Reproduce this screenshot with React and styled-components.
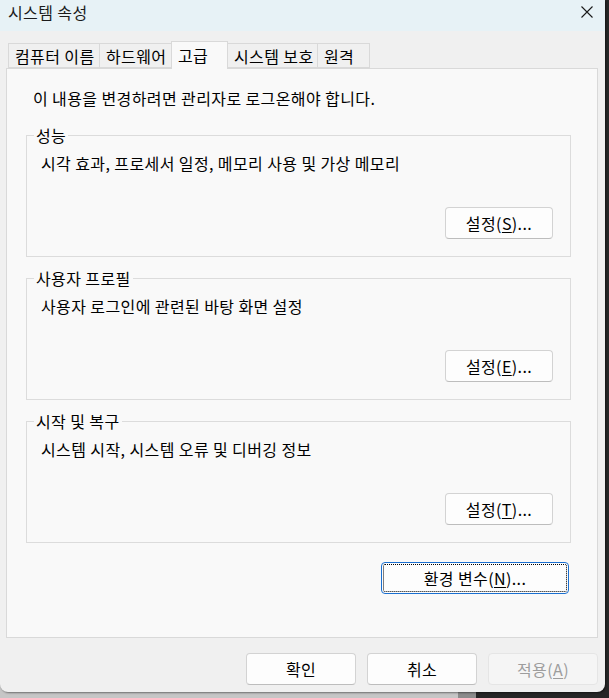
import React from 'react';
import styled, { createGlobalStyle } from 'styled-components';

const Global = createGlobalStyle`
  html, body { margin: 0; padding: 0; }
  body {
    width: 609px;
    height: 698px;
    overflow: hidden;
    background: linear-gradient(to right, #c6c6c6 0 458px, #8c8c8c 458px 476px, #262626 476px);
    font-family: "Noto Sans CJK KR", "Noto Sans", sans-serif;
  }
`;

const Window = styled.div`
  width: 605px;
  height: 692px;
  display: flex;
  flex-direction: column;
  background: #f0f0f0;
  border-radius: 0 0 8px 8px;
  overflow: hidden;
  box-shadow: 1px 1px 2px rgba(0, 0, 0, 0.45);
  color: #000;
  font-size: 16px;
  line-height: 18px;
  letter-spacing: 0.4px;
`;

const TitleBar = styled.div`
  height: 31px;
  flex: none;
  box-sizing: border-box;
  background: #e7f2f6;
  display: flex;
  justify-content: space-between;
  align-items: flex-start;
  padding: 3px 0 0 8px;
`;

const Title = styled.span`
  color: #1b1b1b;
`;

const Close = styled.svg`
  width: 12px;
  height: 12px;
  margin: 3px 12px 0 0;
`;

const Body = styled.div`
  flex: 1;
  display: flex;
  flex-direction: column;
  padding: 10px 7px 0 6px;
`;

const TabRow = styled.div`
  display: flex;
  align-items: flex-end;
  height: 28px;
  padding-left: 3px;
  margin-bottom: -1px;
  position: relative;
  z-index: 1;
`;

const Tab = styled.div`
  box-sizing: border-box;
  width: ${p => p.$w}px;
  height: ${p => (p.$active ? 28 : 25)}px;
  margin-bottom: ${p => (p.$active ? 0 : 1)}px;
  margin-left: -1px;
  padding: ${p => (p.$active ? '4px 0 0 6px' : '3px 0 0 6px')};
  border: 1px solid #d9d9d9;
  border-bottom: ${p => (p.$active ? 'none' : '1px solid #d9d9d9')};
  background: ${p => (p.$active ? '#f9f9f9' : '#f0f0f0')};
  position: relative;
  z-index: ${p => (p.$active ? 2 : 1)};
  white-space: nowrap;
`;

const Panel = styled.div`
  box-sizing: border-box;
  height: 570px;
  border: 1px solid #d9d9d9;
  background: #f9f9f9;
  padding: 20px 26px 0 19px;
  display: flex;
  flex-direction: column;
`;

const Note = styled.p`
  margin: 0 0 19px 7px;
  font-size: 16px;
  line-height: 18px;
`;

const Group = styled.fieldset`
  box-sizing: border-box;
  height: 131px;
  margin: 0 0 12px 0;
  padding: 10px 17px 0 14px;
  border: 1px solid #dcdcdc;
  display: flex;
  flex-direction: column;
  min-width: 0;
`;

const Legend = styled.legend`
  padding: 0 2px;
  margin-left: -7px;
  font-size: 16px;
  line-height: 18px;
`;

const Desc = styled.div`
  font-size: 16px;
  line-height: 18px;
`;

const Button = styled.button`
  box-sizing: border-box;
  width: ${p => p.$w || 108}px;
  height: 32px;
  padding: 0;
  font-family: inherit;
  font-size: 16px;
  line-height: 18px;
  letter-spacing: inherit;
  color: #000;
  background: #fdfdfd;
  border: 1px solid #d3d3d3;
  border-bottom-color: #bdbdbd;
  border-radius: 4px;
  cursor: default;
  u { text-underline-offset: 2px; }
  &:disabled {
    color: #9d9d9d;
    background: #f5f5f5;
    border-color: #e5e5e5;
  }
`;

const FocusButton = styled(Button)`
  border: 1px solid #1a6fd0;
  outline: 1px dotted #000;
  outline-offset: -3px;
`;

const GroupButton = styled(Button)`
  align-self: flex-end;
  margin-top: 35px;
`;

const EnvRow = styled.div`
  display: flex;
  justify-content: flex-end;
  margin-top: 7px;
  padding-right: 2px;
`;

const Footer = styled.div`
  display: flex;
  justify-content: flex-end;
  gap: 11px;
  margin-top: 15px;
`;

const groups = [
  { title: '성능', desc: '시각 효과, 프로세서 일정, 메모리 사용 및 가상 메모리', key: 'S' },
  { title: '사용자 프로필', desc: '사용자 로그인에 관련된 바탕 화면 설정', key: 'E' },
  { title: '시작 및 복구', desc: '시스템 시작, 시스템 오류 및 디버깅 정보', key: 'T' },
];

const tabs = [
  { label: '컴퓨터 이름', w: 92 },
  { label: '하드웨어', w: 73 },
  { label: '고급', w: 57, active: true },
  { label: '시스템 보호', w: 91 },
  { label: '원격', w: 53 },
];

export default function App() {
  return (
    <>
      <Global />
      <Window>
        <TitleBar>
          <Title>시스템 속성</Title>
          <Close viewBox="0 0 12 12">
            <path d="M0.5 0.5 L11.5 11.5 M11.5 0.5 L0.5 11.5" stroke="#1a1a1a" strokeWidth="1.1" fill="none" />
          </Close>
        </TitleBar>
        <Body>
          <TabRow>
            {tabs.map(t => (
              <Tab key={t.label} $w={t.w} $active={t.active}>{t.label}</Tab>
            ))}
          </TabRow>
          <Panel>
            <Note>이 내용을 변경하려면 관리자로 로그온해야 합니다.</Note>
            {groups.map(g => (
              <Group key={g.title}>
                <Legend>{g.title}</Legend>
                <Desc>{g.desc}</Desc>
                <GroupButton>설정(<u>{g.key}</u>)...</GroupButton>
              </Group>
            ))}
            <EnvRow>
              <FocusButton $w={188}>환경 변수(<u>N</u>)...</FocusButton>
            </EnvRow>
          </Panel>
          <Footer>
            <Button $w={110}>확인</Button>
            <Button $w={110}>취소</Button>
            <Button $w={110} disabled>적용(<u>A</u>)</Button>
          </Footer>
        </Body>
      </Window>
    </>
  );
}
